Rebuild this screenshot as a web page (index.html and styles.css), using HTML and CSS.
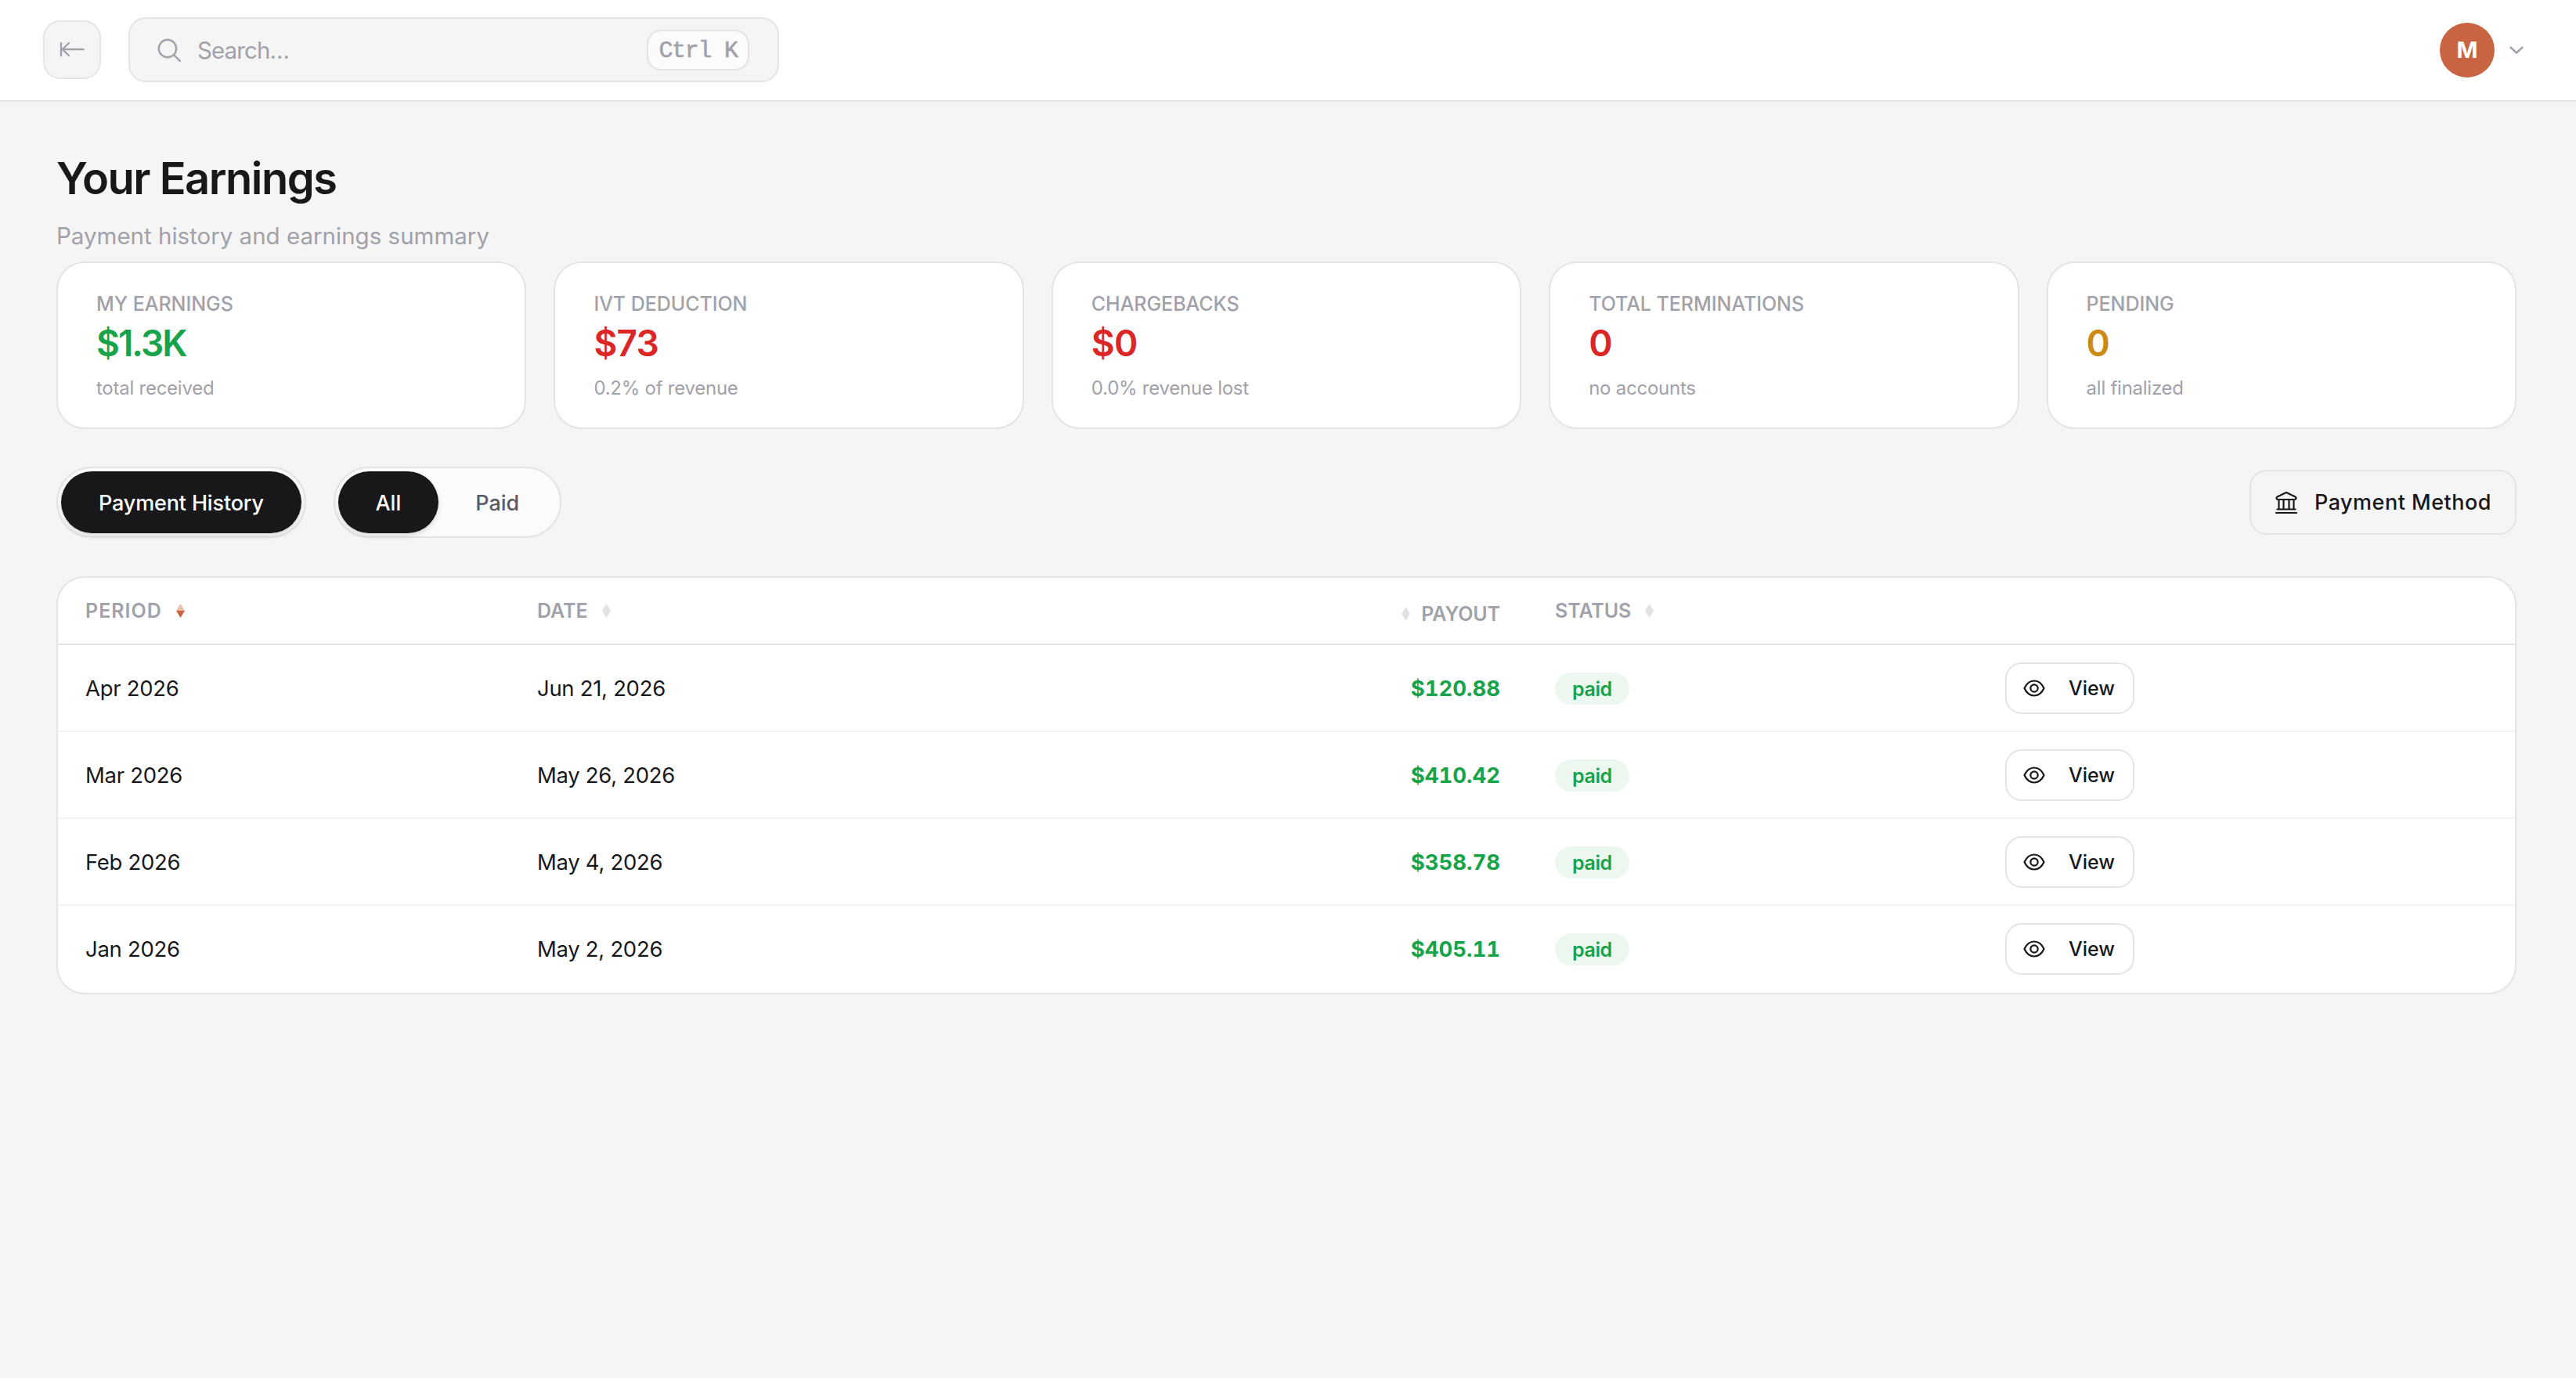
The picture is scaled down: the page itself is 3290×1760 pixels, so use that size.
FILE: index.html
```
<!DOCTYPE html>
<html lang="en">
<head>
    <meta charset="UTF-8">
    <meta name="viewport" content="width=device-width, initial-scale=1.0">
    <title>Your Earnings</title>
    <link rel="stylesheet" href="styles.css">
</head>
<body>
    <svg class="sprite" aria-hidden="true">
        <symbol id="eye" viewBox="0 0 28 22">
            <path d="M1.500 11C4 5.500 8.500 1.500 14 1.500s10 4 12.500 9.500C24 16.500 19.500 20.500 14 20.500S4 16.500 1.500 11z" />
            <circle cx="14" cy="11" r="4.700" />
        </symbol>
        <symbol id="sort" viewBox="0 0 11 18">
            <path d="M5.500 0L11 9H0zM5.500 18L11 9H0z" />
        </symbol>
    </svg>

    <header class="topbar">
        <button class="collapse-button" aria-label="Collapse sidebar">
            <svg width="32" height="20" viewBox="0 0 32 20"><path d="M2 2v16M12 2L3.500 10l8.500 8M4 10h26.500" /></svg>
        </button>
        <div class="search">
            <svg width="30" height="30" viewBox="0 0 30 30"><circle cx="13" cy="13" r="11.200" /><path d="M21 21l8 8" /></svg>
            <span class="search-text">Search…</span>
            <kbd>Ctrl K</kbd>
        </div>
        <div class="user">
            <span class="avatar">M</span>
            <svg width="18" height="10" viewBox="0 0 18 10"><path d="M1.500 1.500L9 8.500l7.500-7" /></svg>
        </div>
    </header>

    <main>
        <h1>Your Earnings</h1>
        <p class="subtitle">Payment history and earnings summary</p>

        <section class="cards">
            <div class="card">
                <div class="card-label">MY EARNINGS</div>
                <div class="card-value green tight">$1.3K</div>
                <div class="card-note">total received</div>
            </div>
            <div class="card">
                <div class="card-label">IVT DEDUCTION</div>
                <div class="card-value red">$73</div>
                <div class="card-note">0.2% of revenue</div>
            </div>
            <div class="card">
                <div class="card-label">CHARGEBACKS</div>
                <div class="card-value red">$0</div>
                <div class="card-note">0.0% revenue lost</div>
            </div>
            <div class="card">
                <div class="card-label">TOTAL TERMINATIONS</div>
                <div class="card-value red">0</div>
                <div class="card-note">no accounts</div>
            </div>
            <div class="card">
                <div class="card-label">PENDING</div>
                <div class="card-value amber">0</div>
                <div class="card-note">all finalized</div>
            </div>
        </section>

        <div class="toolbar">
            <div class="tabs">
                <button class="tab active">Payment History</button>
            </div>
            <div class="tabs filter">
                <button class="tab active">All</button>
                <button class="tab">Paid</button>
            </div>
            <button class="method-button">
                <svg width="28" height="28" viewBox="0 0 28 28"><path d="M2 9.500c-1-1.500-.5-2.500 1-3.300L14 1l11 5.200c1.500.8 2 1.800 1 3.300-.3.500-.8.500-1.300.5H3.300C2.800 10 2.300 10 2 9.500zM4.500 10v12.500M10.500 10v12.500M17.500 10v12.500M23.500 10v12.500M2.500 22.500h23M1 27h26" /></svg>
                Payment Method
            </button>
        </div>

        <div class="table-card">
            <table>
                <thead>
                    <tr>
                        <th class="col-period">PERIOD<svg class="sort sorted" viewBox="0 0 11 18"><path class="sort-up" d="M5.500 0L11 9H0z" /><path d="M5.500 18L11 9H0z" /></svg></th>
                        <th class="col-date">DATE<svg class="sort"><use href="#sort" /></svg></th>
                        <th class="col-payout"><svg class="sort"><use href="#sort" /></svg>PAYOUT</th>
                        <th class="col-status">STATUS<svg class="sort"><use href="#sort" /></svg></th>
                        <th></th>
                    </tr>
                </thead>
                <tbody>
                    <tr>
                        <td>Apr 2026</td>
                        <td class="date">Jun 21, 2026</td>
                        <td class="payout">$120.88</td>
                        <td><span class="badge">paid</span></td>
                        <td><button class="view-button"><svg><use href="#eye" /></svg>View</button></td>
                    </tr>
                    <tr>
                        <td>Mar 2026</td>
                        <td class="date">May 26, 2026</td>
                        <td class="payout">$410.42</td>
                        <td><span class="badge">paid</span></td>
                        <td><button class="view-button"><svg><use href="#eye" /></svg>View</button></td>
                    </tr>
                    <tr>
                        <td>Feb 2026</td>
                        <td class="date">May 4, 2026</td>
                        <td class="payout">$358.78</td>
                        <td><span class="badge">paid</span></td>
                        <td><button class="view-button"><svg><use href="#eye" /></svg>View</button></td>
                    </tr>
                    <tr>
                        <td>Jan 2026</td>
                        <td class="date">May 2, 2026</td>
                        <td class="payout">$405.11</td>
                        <td><span class="badge">paid</span></td>
                        <td><button class="view-button"><svg><use href="#eye" /></svg>View</button></td>
                    </tr>
                </tbody>
            </table>
        </div>
    </main>
</body>
</html>
```
FILE: styles.css
```
* {
    box-sizing: border-box;
}

body {
    margin: 0;
    min-height: 100vh;
    background-color: #f5f5f5;
    color: #18181b;
    font-family: Inter, "Liberation Sans", sans-serif;
    font-size: 27.5px;
}

button {
    font-family: inherit;
    color: inherit;
    cursor: pointer;
}

svg {
    display: block;
    flex-shrink: 0;
    fill: none;
    stroke: currentColor;
    stroke-width: 2.4;
    stroke-linecap: round;
    stroke-linejoin: round;
}

.sprite {
    display: none;
}

/* top bar */
.topbar {
    display: flex;
    align-items: center;
    height: 130px;
    padding: 0 67px 1px 55px;
    background-color: #fff;
    border-bottom: 2px solid #e4e4e4;
    color: #a1a1aa;
}

.collapse-button {
    display: flex;
    align-items: center;
    justify-content: center;
    width: 74px;
    height: 75px;
    padding: 0 0 2px;
    background-color: #f5f5f5;
    border: 2px solid #e4e4e4;
    border-radius: 22px;
}

.search {
    display: flex;
    align-items: center;
    width: 831px;
    height: 83px;
    margin-left: 35px;
    padding: 0 36px 0 35px;
    background-color: #f5f5f5;
    border: 2px solid #e4e4e4;
    border-radius: 22px;
}

.search-text {
    flex: 1;
    margin-left: 21px;
    font-size: 29.5px;
    letter-spacing: -0.9px;
}

kbd {
    width: 131px;
    height: 52px;
    line-height: 51px;
    text-align: center;
    font-family: "Liberation Mono", monospace;
    font-size: 30px;
    letter-spacing: -1.3px;
    -webkit-text-stroke: 0.6px #a1a1aa;
    background-color: #fbfbfb;
    border: 2px solid #e4e4e4;
    border-radius: 18px;
}

.user {
    display: flex;
    align-items: center;
    gap: 19px;
    margin-left: auto;
}

.avatar {
    width: 70px;
    height: 70px;
    border-radius: 50%;
    line-height: 70px;
    text-align: center;
    font-size: 29px;
    font-weight: 700;
    color: #fff;
    background-color: #c96442;
}

/* page heading */
main {
    padding: 66px 76px 0 72px;
}

h1 {
    margin: 0;
    font-size: 56px;
    font-weight: 600;
    line-height: 64px;
    letter-spacing: -1.5px;
}

.subtitle {
    margin: 19px 0 11px;
    font-size: 29.5px;
    line-height: 44px;
    color: #a1a1aa;
}

/* summary cards */
.cards {
    display: grid;
    grid-template-columns: repeat(5, 1fr);
    gap: 35px;
}

.card {
    height: 214px;
    padding: 36px 48px 0 49px;
    background-color: #fff;
    border: 2px solid #e4e4e4;
    border-radius: 36px;
}

.card-label {
    font-size: 25px;
    font-weight: 500;
    line-height: 32px;
    letter-spacing: -0.05px;
    color: #a1a1aa;
}

.card-value {
    margin-top: 6px;
    font-size: 46px;
    font-weight: 600;
    line-height: 56px;
    letter-spacing: -0.8px;
}

.card-value.tight {
    letter-spacing: -2px;
}

.card-note {
    margin-top: 14px;
    font-size: 24px;
    line-height: 32px;
    letter-spacing: -0.25px;
    color: #a1a1aa;
}

.green {
    color: #16a34a;
}

.red {
    color: #dc2626;
}

.amber {
    color: #ca8a14;
}

/* tabs and payment method */
.toolbar {
    display: flex;
    align-items: center;
    gap: 35px;
    margin: 48px 0 49px;
}

.tabs {
    display: flex;
    height: 91px;
    padding: 4px;
    background-color: #fbfbfb;
    border: 2px solid #e4e4e4;
    border-radius: 46px;
}

.tab {
    padding: 1px 48px 0;
    border: none;
    border-radius: 40px;
    background: none;
    font-size: 27px;
    font-weight: 500;
    letter-spacing: -0.15px;
    color: #5b5b63;
}

.filter .tab {
    padding: 1px 47.5px 0;
    letter-spacing: 0;
}

.tab.active {
    color: #fff;
    background-color: #18181b;
    box-shadow: 0 3px 6px rgba(0, 0, 0, 0.14);
}

.method-button {
    display: flex;
    align-items: center;
    gap: 22px;
    height: 83px;
    margin-left: auto;
    padding: 0 30px 0 31px;
    background-color: #f5f5f5;
    border: 2px solid #e4e4e4;
    border-radius: 22px;
    font-size: 27px;
    font-weight: 500;
    letter-spacing: 0.5px;
}

.method-button svg {
    stroke-width: 2.2;
}

/* payments table */
.table-card {
    overflow: hidden;
    background-color: #fff;
    border: 2px solid #e4e4e4;
    border-radius: 36px;
}

table {
    width: 100%;
    table-layout: fixed;
    border-collapse: separate;
    border-spacing: 0;
}

th,
td {
    padding: 0 36px;
    text-align: left;
}

th {
    height: 86px;
    border-bottom: 2px solid #e4e4e4;
    font-size: 25px;
    font-weight: 600;
    color: #a1a1aa;
}

.col-period {
    width: 576px;
    padding-left: 35px;
    letter-spacing: 1px;
}

.col-date {
    width: 650px;
}

.col-payout {
    width: 650px;
    padding: 8px 34px 0 0;
    text-align: right;
    letter-spacing: -0.1px;
}

.col-status {
    width: 575px;
    letter-spacing: -0.1px;
}

.sort {
    display: inline-block;
    width: 11px;
    height: 18px;
    margin-left: 18px;
    stroke: none;
    fill: #e2e2e5;
}

.col-payout .sort {
    margin: 0 14px 0 0;
}

.sorted {
    fill: #c96442;
}

.sort-up {
    opacity: 0.4;
}

td {
    height: 111px;
    padding-top: 1px;
    border-bottom: 2px solid #f4f4f4;
    letter-spacing: -0.3px;
}

td:first-child {
    padding-left: 35px;
}

tr:last-child td {
    border-bottom-color: transparent;
}

.date {
    letter-spacing: -0.3px;
}

.payout {
    padding-right: 34px;
    text-align: right;
    font-weight: 700;
    font-variant-numeric: tabular-nums;
    letter-spacing: 0;
    color: #16a34a;
}

.badge {
    display: inline-block;
    padding: 1px 22px 0;
    border-radius: 21px;
    font-size: 25px;
    font-weight: 600;
    line-height: 40px;
    letter-spacing: -0.4px;
    color: #16a34a;
    background-color: #ecf7f0;
}

.view-button {
    display: flex;
    align-items: center;
    width: 165px;
    height: 66px;
    padding: 0 0 0 21px;
    background-color: #fff;
    border: 2px solid #e4e4e4;
    border-radius: 21px;
    font-size: 25px;
    font-weight: 500;
}

.view-button svg {
    width: 28px;
    height: 22px;
    margin-right: 30px;
    stroke-width: 2.2;
}
```
